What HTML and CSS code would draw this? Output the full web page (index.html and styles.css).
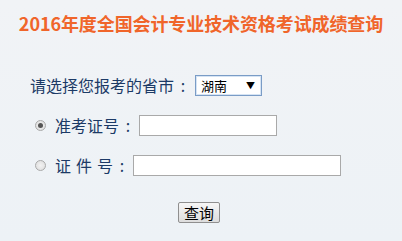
FILE: index.html
```html
<!DOCTYPE html>
<html lang="zh">
<head>
<meta charset="utf-8">
<link rel="stylesheet" href="styles.css">
</head>
<body>
<div class="page">
  <h1 class="title">2016年度全国会计专业技术资格考试成绩查询</h1>
  <div class="form">
    <div class="row row-province">
      <span class="label">请选择您报考的省市</span><span class="colon c1">:</span>
      <div class="select"><span>湖南</span><span class="arrow">▼</span></div>
    </div>
    <div class="row row-radio">
      <span class="radio checked"></span>
      <span class="label">准考证号</span><span class="colon c2">:</span>
      <span class="input input-short"></span>
    </div>
    <div class="row row-radio">
      <span class="radio"></span>
      <span class="label">证<span class="sp"></span>件<span class="sp"></span>号</span><span class="colon c3">:</span>
      <span class="input input-long"></span>
    </div>
    <div class="actions">
      <button class="btn">查询</button>
    </div>
  </div>
</div>
</body>
</html>
```

FILE: styles.css
```css
* { box-sizing: border-box; }
html, body { margin: 0; padding: 0; }
body {
  width: 402px;
  height: 241px;
  background: linear-gradient(#f1f3f6, #edf2f6);
  font-family: "Noto Sans CJK SC", "Noto Sans", sans-serif;
  overflow: hidden;
}
.title {
  margin: 0;
  padding-top: 11px;
  text-align: center;
  font-size: 18px;
  line-height: 24px;
  font-weight: bold;
  color: #f0652a;
  letter-spacing: -0.1px;
}
.form {
  padding-top: 40px;
  padding-left: 30px;
}
.row {
  display: flex;
  align-items: center;
  height: 20px;
  color: #1c3a66;
  font-size: 16px;
}
.row-province { margin-bottom: 20px; }
.row-radio { margin-bottom: 20px; padding-left: 5px; }
.label { white-space: nowrap; display: flex; }
.sp { display: inline-block; width: 5px; }
.colon {
  display: inline-block;
  width: 6px;
  text-align: center;
}
.c1 { margin-left: 6px; margin-right: 9px; }
.c2 { margin-left: 6px; margin-right: 8px; }
.c3 { margin-left: 6px; margin-right: 8px; }
.select {
  width: 67px;
  height: 21px;
  border: 1px solid #7a9cc6;
  box-shadow: inset 0 0 0 1px #d6e4f4;
  background: #fff;
  display: flex;
  align-items: center;
  justify-content: space-between;
  padding: 0 6px 0 5px;
  font-size: 13px;
  color: #000;
}
.arrow { font-size: 9px; }
.radio {
  width: 11px;
  height: 11px;
  border-radius: 50%;
  border: 1px solid #a9a9a9;
  background: radial-gradient(#f2f2f2, #dcdcdc);
  margin-right: 9px;
  position: relative;
}
.radio.checked::after {
  content: "";
  position: absolute;
  left: 2px; top: 2px;
  width: 5px; height: 5px;
  border-radius: 50%;
  background: #555;
}
.input {
  height: 21px;
  border: 1px solid #a9a9a9;
  background: #fff;
}
.input-short { width: 138px; }
.input-long { width: 208px; }
.actions {
  padding-top: 5px;
  padding-left: 148px;
}
.btn {
  width: 42px;
  height: 21px;
  padding: 0;
  border: 1px solid #8f8f8f;
  border-radius: 2px;
  background: linear-gradient(#f6f6f6, #dddddd);
  font-family: "Noto Sans CJK SC", sans-serif;
  font-size: 15px;
  line-height: 19px;
  color: #000;
}
```
